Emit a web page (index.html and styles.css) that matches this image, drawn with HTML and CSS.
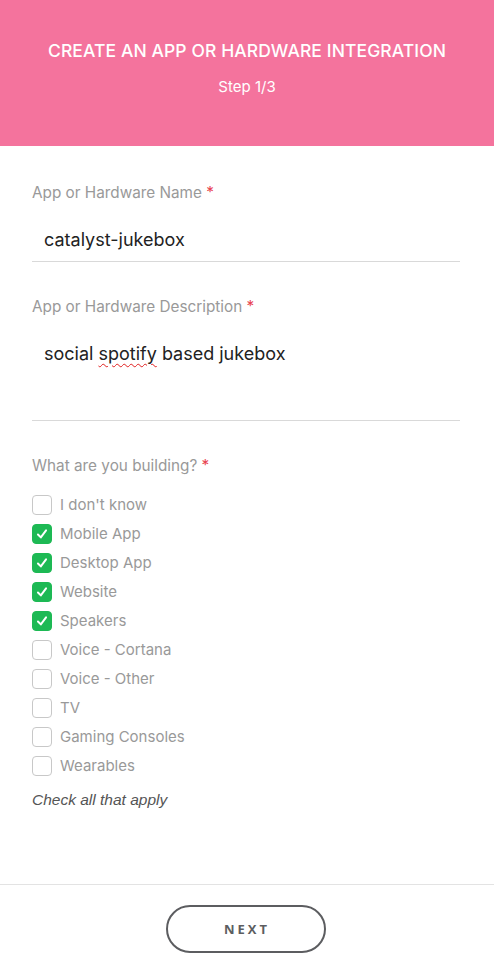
FILE: index.html
```html
<!DOCTYPE html>
<html>
<head>
<meta charset="utf-8">
<link rel="stylesheet" href="styles.css">
</head>
<body>
<header class="hero">
  <h1 class="hero-title">CREATE AN APP OR HARDWARE INTEGRATION</h1>
  <p class="hero-step">Step 1/3</p>
</header>
<main class="form">
  <div class="field">
    <label class="field-label">App or Hardware Name <span class="req">*</span></label>
    <div class="input">catalyst-jukebox</div>
  </div>
  <div class="field">
    <label class="field-label">App or Hardware Description <span class="req">*</span></label>
    <div class="input textarea">social <span class="misspelled">spotify</span> based jukebox</div>
  </div>
  <div class="field">
    <label class="field-label">What are you building? <span class="req">*</span></label>
    <ul class="checks">
      <li class="check"><span class="box"></span>I don't know</li>
      <li class="check"><span class="box on"><svg viewBox="0 0 20 20"><path d="M5.5 10.5 L8.7 13.8 L14.5 6" /></svg></span>Mobile App</li>
      <li class="check"><span class="box on"><svg viewBox="0 0 20 20"><path d="M5.5 10.5 L8.7 13.8 L14.5 6" /></svg></span>Desktop App</li>
      <li class="check"><span class="box on"><svg viewBox="0 0 20 20"><path d="M5.5 10.5 L8.7 13.8 L14.5 6" /></svg></span>Website</li>
      <li class="check"><span class="box on"><svg viewBox="0 0 20 20"><path d="M5.5 10.5 L8.7 13.8 L14.5 6" /></svg></span>Speakers</li>
      <li class="check"><span class="box"></span>Voice - Cortana</li>
      <li class="check"><span class="box"></span>Voice - Other</li>
      <li class="check"><span class="box"></span>TV</li>
      <li class="check"><span class="box"></span>Gaming Consoles</li>
      <li class="check"><span class="box"></span>Wearables</li>
    </ul>
    <p class="hint">Check all that apply</p>
  </div>
</main>
<footer class="footer">
  <button class="next">NEXT</button>
</footer>
</body>
</html>
```
FILE: styles.css
```css
* { box-sizing: border-box; }
html, body { margin: 0; padding: 0; background: #fff; }
body { font-family: Inter, "Liberation Sans", sans-serif; width: 494px; }

.hero {
  background: #f4739d;
  height: 146px;
  color: #fff;
  text-align: center;
  padding-top: 41px;
}
.hero-title {
  margin: 0;
  font-size: 17.5px;
  font-weight: 500;
  line-height: 20px;
  letter-spacing: 0.1px;
}
.hero-step {
  margin: 16px 0 0;
  font-size: 15px;
  line-height: 20px;
}

.form {
  padding: 37px 34px 0 32px;
  height: 738px;
}
.field { display: flex; flex-direction: column; }
.field + .field { margin-top: 35px; }
.field-label {
  font-size: 15.3px;
  line-height: 20px;
  color: #999;
}
.req { color: #e8424f; }
.input {
  margin-top: 17px;
  height: 42px;
  padding: 0 12px;
  line-height: 40px;
  font-size: 18px;
  color: #222;
  border-bottom: 1px solid #d9d9d9;
}
.input.textarea {
  height: 87px;
  padding-top: 0;
}
.misspelled {
  text-decoration: underline wavy #e02020;
  text-decoration-thickness: 1px;
  text-underline-offset: 3px;
}
.checks {
  list-style: none;
  margin: 14px 0 0;
  padding: 0;
}
.check {
  display: flex;
  align-items: center;
  gap: 8px;
  height: 29px;
  font-size: 15px;
  color: #999;
}
.box {
  width: 20px;
  height: 20px;
  border: 1px solid #c8c8c8;
  border-radius: 4px;
  flex: none;
  display: flex;
}
.box.on { background: #1db954; border-color: #1db954; }
.box svg { width: 18px; height: 18px; fill: none; stroke: #fff; stroke-width: 2.2; stroke-linecap: round; stroke-linejoin: round; }
.hint {
  margin: 10px 0 0;
  font-family: "Liberation Sans", Arial, sans-serif;
  font-style: italic;
  font-size: 15.5px;
  line-height: 20px;
  color: #555;
}

.footer {
  border-top: 1px solid #e3e3e3;
  height: 87px;
  display: flex;
  justify-content: center;
  padding-top: 20px;
}
.next {
  width: 160px;
  height: 48px;
  margin-right: 3px;
  border: 2px solid #5c5d60;
  border-radius: 24px;
  background: #fff;
  font-family: "Open Sans", sans-serif;
  font-weight: bold;
  font-size: 13px;
  letter-spacing: 3px;
  color: #5c5d60;
  padding: 0 0 0 3px;
}
```
